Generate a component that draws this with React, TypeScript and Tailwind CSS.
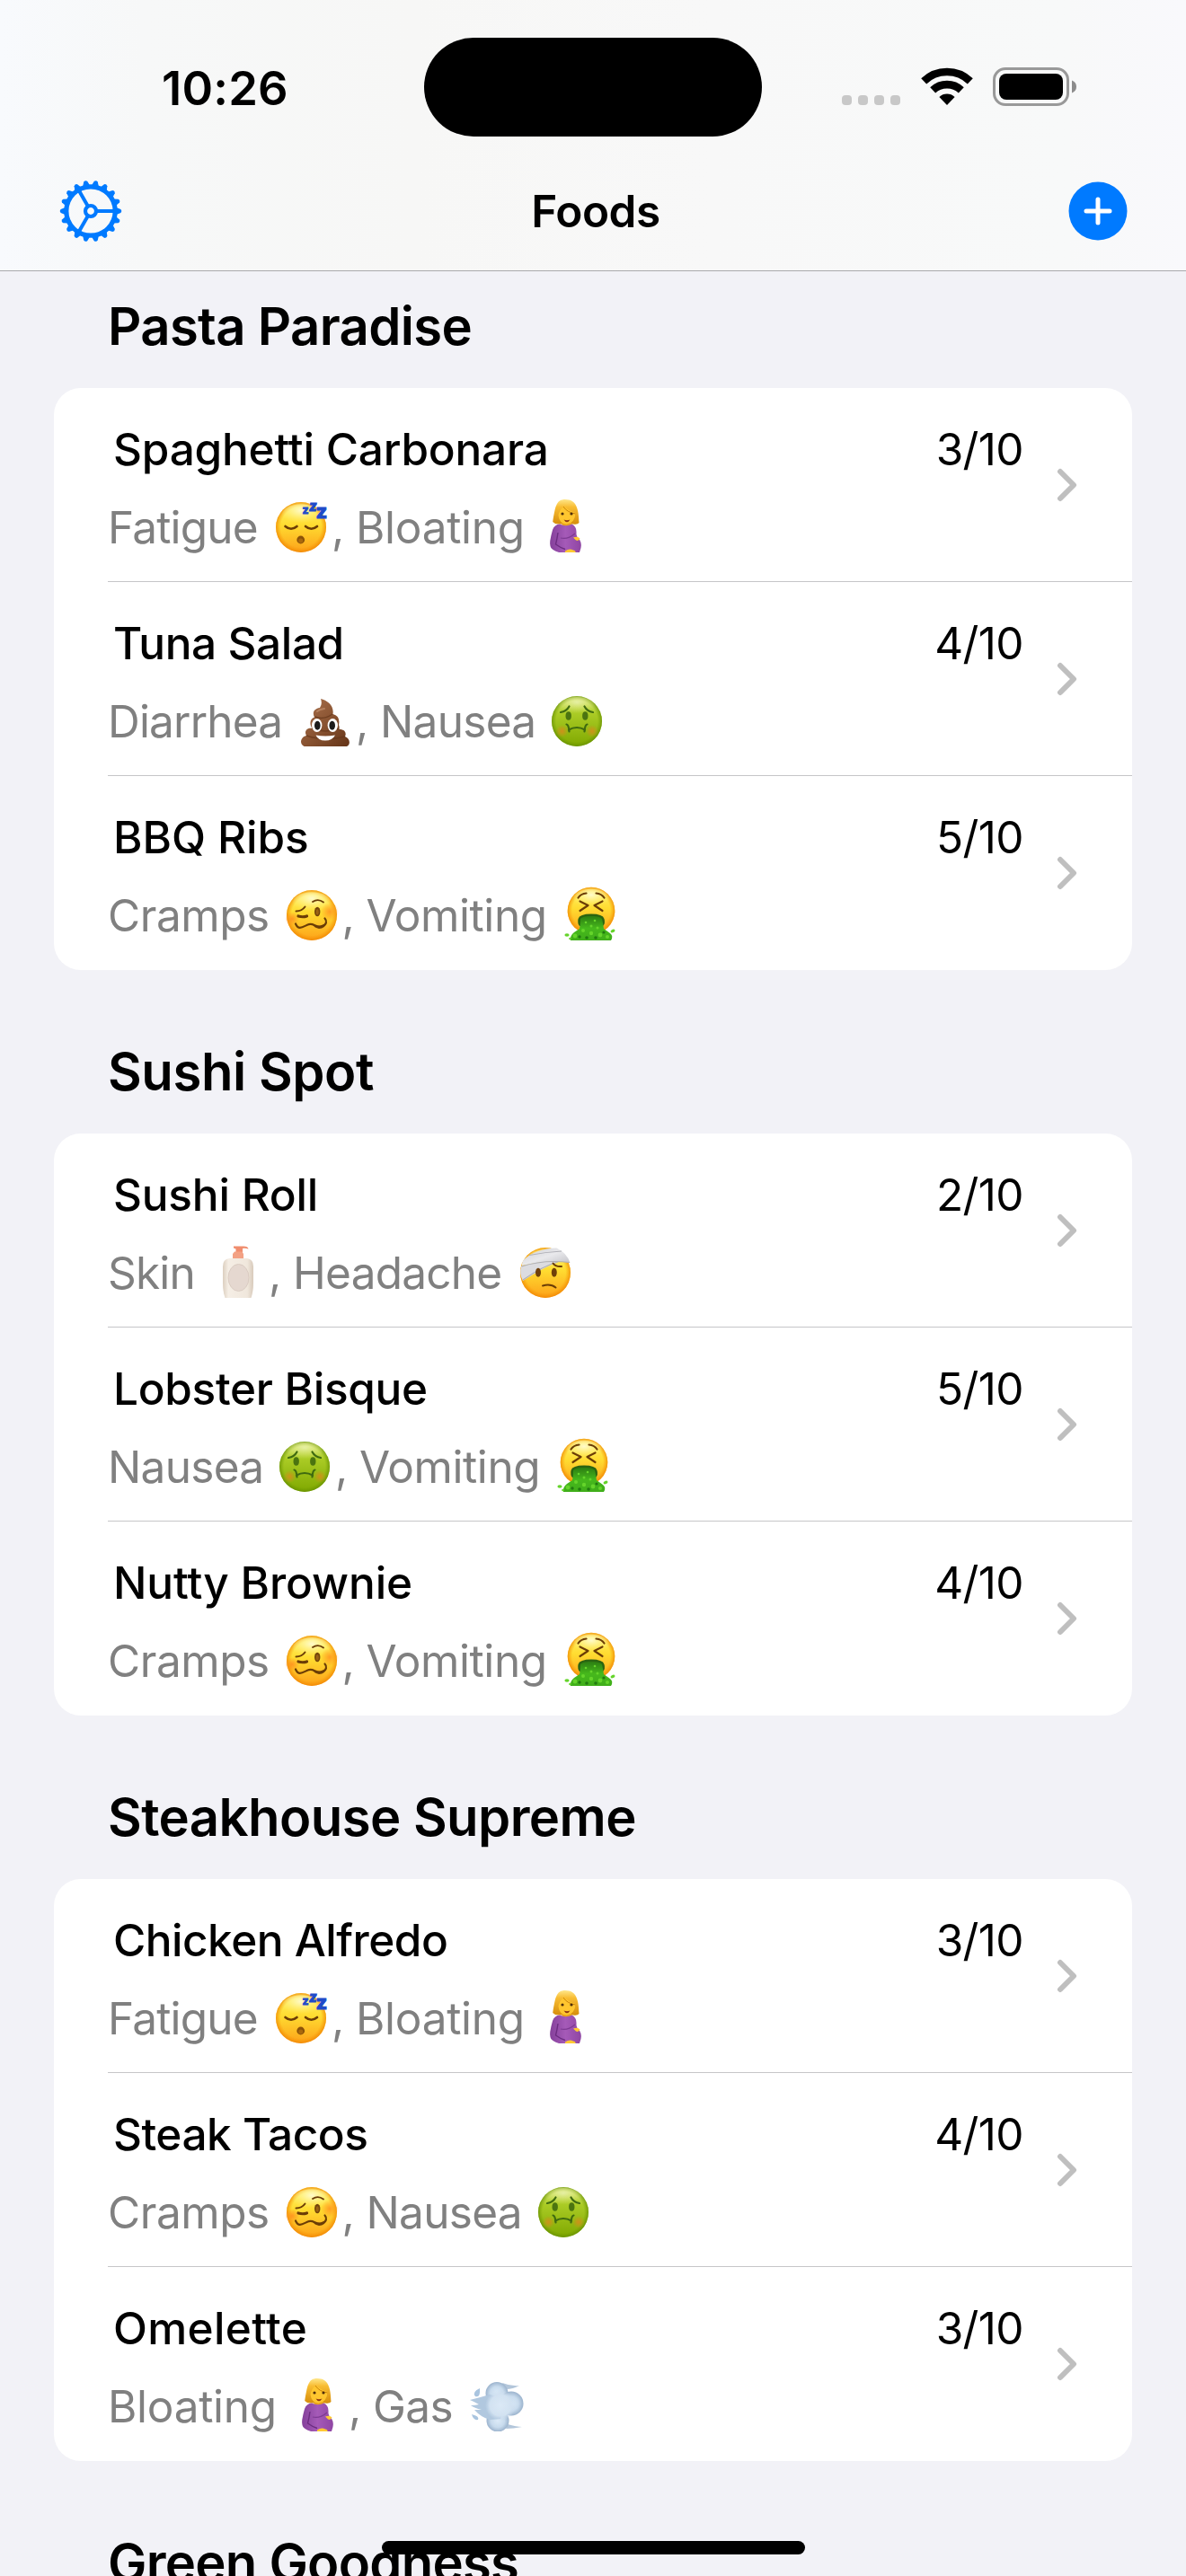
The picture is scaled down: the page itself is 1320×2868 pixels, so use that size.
import React from "react";

type EmojiName = "sleep" | "pregnant" | "poop" | "nausea" | "woozy" | "vomit" | "lotion" | "bandage" | "gas";

function Defs() {
  return (
    <svg className="absolute h-0 w-0" aria-hidden="true">
      <defs>
        <linearGradient id="faceBase" x1="0" y1="0" x2="0" y2="1">
          <stop offset="0" stopColor="#fff36a" />
          <stop offset="0.45" stopColor="#ffdc31" />
          <stop offset="1" stopColor="#fda119" />
        </linearGradient>
        <radialGradient id="faceEdge" cx="0.5" cy="0.5" r="0.5">
          <stop offset="0.8" stopColor="#f59300" stopOpacity="0" />
          <stop offset="1" stopColor="#ef8200" stopOpacity="0.75" />
        </radialGradient>
        <radialGradient id="shine" cx="0.5" cy="0.3" r="0.6">
          <stop offset="0" stopColor="#fffde0" stopOpacity="0.85" />
          <stop offset="1" stopColor="#fff68a" stopOpacity="0" />
        </radialGradient>
        <linearGradient id="greenFace" x1="0" y1="0" x2="0" y2="1">
          <stop offset="0" stopColor="#dcec84" />
          <stop offset="0.35" stopColor="#aacb25" />
          <stop offset="1" stopColor="#7fa800" />
        </linearGradient>
        <radialGradient id="greenEdge" cx="0.5" cy="0.5" r="0.5">
          <stop offset="0.82" stopColor="#6e9800" stopOpacity="0" />
          <stop offset="1" stopColor="#5f8a00" stopOpacity="0.7" />
        </radialGradient>
        <radialGradient id="cheek">
          <stop offset="0" stopColor="#d98a1c" stopOpacity="0.85" />
          <stop offset="1" stopColor="#d98a1c" stopOpacity="0" />
        </radialGradient>
        <radialGradient id="blush">
          <stop offset="0" stopColor="#ff7a1a" stopOpacity="0.65" />
          <stop offset="1" stopColor="#ff7a1a" stopOpacity="0" />
        </radialGradient>
        <linearGradient id="brown" x1="0" y1="0" x2="1" y2="1">
          <stop offset="0" stopColor="#ad7450" />
          <stop offset="0.5" stopColor="#8a5432" />
          <stop offset="1" stopColor="#643417" />
        </linearGradient>
        <linearGradient id="hair" x1="0" y1="0" x2="0" y2="1">
          <stop offset="0" stopColor="#ffe78a" />
          <stop offset="0.3" stopColor="#f8bd33" />
          <stop offset="1" stopColor="#d58d0c" />
        </linearGradient>
        <linearGradient id="purple" x1="0" y1="0" x2="1" y2="0">
          <stop offset="0" stopColor="#84409a" />
          <stop offset="0.5" stopColor="#a55ab8" />
          <stop offset="1" stopColor="#8f46a3" />
        </linearGradient>
        <linearGradient id="cream" x1="0" y1="0" x2="1" y2="0">
          <stop offset="0" stopColor="#dccfbf" />
          <stop offset="0.18" stopColor="#f5eee5" />
          <stop offset="0.8" stopColor="#f0e7dc" />
          <stop offset="1" stopColor="#d8cabb" />
        </linearGradient>
        <linearGradient id="gauze" x1="0" y1="0" x2="1" y2="1">
          <stop offset="0" stopColor="#cfcfd3" />
          <stop offset="0.5" stopColor="#e9e9ec" />
          <stop offset="1" stopColor="#bfbfc5" />
        </linearGradient>
        <radialGradient id="puff">
          <stop offset="0" stopColor="#dcebf8" />
          <stop offset="0.6" stopColor="#c8dbed" />
          <stop offset="1" stopColor="#9bb3cd" />
        </radialGradient>
        <radialGradient id="puffCore">
          <stop offset="0" stopColor="#dbe9f6" />
          <stop offset="0.7" stopColor="#d2e2f1" />
          <stop offset="1" stopColor="#c8dbed" stopOpacity="0" />
        </radialGradient>
        <linearGradient id="slime" x1="0" y1="0" x2="0" y2="1">
          <stop offset="0" stopColor="#2c7d12" />
          <stop offset="0.5" stopColor="#46b81c" />
          <stop offset="1" stopColor="#3fae1a" />
        </linearGradient>
      </defs>
    </svg>
  );
}

function Face({ cx = 32, cy = 32, r = 28 }: { cx?: number; cy?: number; r?: number }) {
  return (
    <>
      <circle cx={cx} cy={cy} r={r} fill="url(#faceBase)" />
      <circle cx={cx} cy={cy} r={r} fill="url(#faceEdge)" />
      <ellipse cx={cx} cy={cy - r * 0.5} rx={r * 0.75} ry={r * 0.42} fill="url(#shine)" />
    </>
  );
}

const ink = "#6b3d06";

const drawings: Record<EmojiName, React.ReactNode> = {
  sleep: (
    <>
      <Face />
      <g fill="none" stroke={ink} strokeWidth="2.6" strokeLinecap="round">
        <path d="M14.500 31Q21 36.500 27.500 31" />
        <path d="M37 31Q43.500 36.500 50 31" />
      </g>
      <circle cx="31.700" cy="46" r="4.400" fill="#8a5208" />
      <circle cx="31.700" cy="47" r="2.600" fill="#a9680d" />
      <g fill="#1f4bc9" stroke="#1f4bc9" strokeWidth="0.9" fontFamily="Inter, sans-serif" fontWeight="800">
        <text x="33.500" y="17" fontSize="12">z</text>
        <text x="41" y="13.800" fontSize="15" fontStyle="italic">z</text>
        <text x="48.500" y="22" fontSize="22">z</text>
      </g>
    </>
  ),
  nausea: (
    <>
      <circle cx="32" cy="32" r="28" fill="url(#greenFace)" />
      <circle cx="32" cy="32" r="28" fill="url(#greenEdge)" />
      <ellipse cx="32" cy="15" rx="20" ry="10" fill="url(#shine)" opacity="0.6" />
      <circle cx="15.500" cy="43" r="7" fill="url(#cheek)" />
      <circle cx="49" cy="43" r="7" fill="url(#cheek)" />
      <ellipse cx="22.700" cy="26" rx="3.200" ry="4.800" fill="#4b7410" />
      <ellipse cx="41.300" cy="26" rx="3.200" ry="4.800" fill="#4b7410" />
      <g fill="none" stroke="#3f6a10" strokeWidth="2.200" strokeLinecap="round">
        <path d="M14 22Q20.500 21 23.500 15.500" />
        <path d="M50 22Q43.500 21 40.500 15.500" />
        <path d="M20.500 35.500Q23 36 23.500 43.500" />
        <path d="M43.500 35.500Q41 36 40.500 43.500" />
        <path d="M23 41.500Q32 36.500 41 41.500" />
      </g>
    </>
  ),
  woozy: (
    <>
      <Face />
      <circle cx="10" cy="36" r="8" fill="url(#blush)" />
      <circle cx="52" cy="28" r="10" fill="url(#blush)" />
      <g fill="none" stroke={ink} strokeLinecap="round" strokeLinejoin="round">
        <path d="M14.500 27.500Q21 27.500 24.500 22.500" strokeWidth="2" />
        <path d="M17 33Q22 34.500 26.500 33" strokeWidth="3.200" />
        <path d="M33 17Q39 13 45 17.500" strokeWidth="1.900" />
        <path d="M14 41.500C17 49 22 45 27.500 42.500C34 39.500 36 46.500 43 44.500C49 42.500 49 38 46.500 35.500" strokeWidth="2.200" />
      </g>
      <path d="M33 42.500Q41 46 48.500 40Q47 47 40 47Q35 46 33 42.500Z" fill={ink} />
      <ellipse cx="38.200" cy="28" rx="3.200" ry="5.200" fill="#74450a" />
      <ellipse cx="38.200" cy="28.500" rx="1.600" ry="3.200" fill="#9b6314" />
    </>
  ),
  vomit: (
    <>
      <Face cy={27} r={26.3} />
      <g fill="none" stroke={ink} strokeWidth="2.200" strokeLinecap="round" strokeLinejoin="round">
        <path d="M17.500 12.500Q20.500 8 26.500 7.500" />
        <path d="M46.500 12.500Q43.500 8 37.500 7.500" />
        <path d="M19.500 16.500L28.500 21L19.500 27" />
        <path d="M44.500 16.500L35.500 21L44.500 27" />
      </g>
      <path d="M17.500 36Q19 30.500 32 30.500Q45 30.500 46.500 36Q48 41 45 44L19 44Q16.500 41 17.500 36Z" fill="#2a6410" />
      <path d="M20 36Q23 32.500 32 33Q41 32.500 44 36Q45.500 43 46 47L53 52Q57 55 54 60H9Q8 55 13 51L19 47Q20 42 20 36Z" fill="url(#slime)" />
      <g fill="#65d42b">
        <circle cx="26" cy="40" r="1.300" />
        <circle cx="36" cy="38" r="1.300" />
        <circle cx="32" cy="44" r="1.500" />
        <circle cx="39" cy="46" r="1.500" />
        <circle cx="23" cy="49" r="2" />
        <circle cx="14" cy="55" r="2.400" />
        <circle cx="32" cy="52" r="2.200" />
        <circle cx="42" cy="54" r="2.400" />
        <circle cx="50" cy="56" r="2" />
        <ellipse cx="5" cy="54" rx="2.600" ry="1.800" />
        <ellipse cx="56" cy="49.500" rx="2.600" ry="1.700" transform="rotate(-25 56 49.500)" />
        <circle cx="8.500" cy="58" r="1.300" />
      </g>
      <g fill="#217a10">
        <circle cx="19" cy="56" r="1.700" />
        <circle cx="27" cy="57" r="1.800" />
        <circle cx="37" cy="57" r="1.800" />
        <circle cx="46" cy="51" r="1.600" />
      </g>
    </>
  ),
  poop: (
    <>
      <path
        d="M27 7C34 9 42 14 40.500 24Q49 26 47 36Q48 38 47.500 41C55 41 55.500 46 54 49C61 52 60 60 54 60.500H11C3 60 3 50 11 48C8 43 12 39 17.500 40C14 35 15 29 20 27.500C17 22 20 18 26 17Q29 13 27 7Z"
        fill="url(#brown)"
      />
      <path d="M20.500 27Q30 31 40 24M17.500 40Q32 46 47 40M11 48Q32 55 54 49" fill="none" stroke="#643619" strokeWidth="1.500" opacity="0.7" />
      <path d="M23 21Q26 18.500 31 18" fill="none" stroke="#c3906d" strokeWidth="2" strokeLinecap="round" opacity="0.7" />
      <ellipse cx="22.700" cy="36.500" rx="5.700" ry="7.400" fill="#fff" />
      <ellipse cx="40.300" cy="36.500" rx="5.700" ry="7.400" fill="#fff" />
      <ellipse cx="23.300" cy="36.700" rx="3.300" ry="5" fill="#1c1c1c" />
      <ellipse cx="39.700" cy="36.700" rx="3.300" ry="5" fill="#1c1c1c" />
      <path d="M21.500 47.500Q32 49.500 43 47.500Q40 53.500 32 53.500Q24 53.500 21.500 47.500Z" fill="#fff" />
    </>
  ),
  bandage: (
    <>
      <Face />
      <path d="M7.500 18Q21 5 44.500 4.500Q56 10 59.500 21Q38 17 6 24Q6 20 7.500 18Z" fill="url(#gauze)" />
      <path d="M5 25Q22 19 46 20Q32 25 7 41Q2.500 33 5 25Z" fill="#dcdce0" />
      <path d="M5.500 25Q30 17 59 20.500M7 40Q30 24 46 20M14 12.500Q32 9 50 8" fill="none" stroke="#aeaeb5" strokeWidth="1.100" />
      <ellipse cx="24" cy="31.700" rx="3" ry="5" fill="#704009" />
      <ellipse cx="41.800" cy="31.700" rx="3" ry="5" fill="#704009" />
      <g fill="none" stroke={ink} strokeWidth="2" strokeLinecap="round">
        <path d="M40.500 21.500Q43 25.500 50 25" />
        <path d="M29 46.500Q38 44 43.500 48.500" />
      </g>
    </>
  ),
  lotion: (
    <>
      <path d="M27 2.500H38Q43 2.500 43.500 5.500Q40 4.500 37 5V9H29.500V5.500L27 4.500Z" fill="#f08d6e" />
      <path d="M28 8.500H36.500L38 11V16H26V11Z" fill="#f3a184" />
      <path d="M22 16H42Q49 17 49 25V43Q49 53 46.500 60H17.500Q15 53 15 43V25Q15 17 22 16Z" fill="url(#cream)" />
      <ellipse cx="32.500" cy="37.500" rx="11.500" ry="15" fill="#e5d8d0" />
      <ellipse cx="32.500" cy="37.500" rx="11.500" ry="15" fill="none" stroke="#d5c6bd" strokeWidth="0.8" />
    </>
  ),
  pregnant: (
    <>
      <path d="M31 1C21 1 20 9 17.200 26Q20 29 25 28.500H40Q44.500 29.500 46.500 27C46 12 44 1 31 1Z" fill="url(#hair)" />
      <path d="M27.500 24H38V31H27.500Z" fill="#e9a31b" />
      <path d="M29 9Q24 14 23.500 19Q24.500 28 32.500 28.500Q42 27.500 42.500 16Q35 14 30.500 9Z" fill="#ffc62f" />
      <path d="M29 9Q33 15.500 42.500 17" fill="none" stroke="#c8820d" strokeWidth="1" />
      <circle cx="28" cy="17" r="1.600" fill="#4d2d0c" />
      <circle cx="38" cy="17" r="1.600" fill="#4d2d0c" />
      <path d="M29.500 23.500Q33 24.800 36.500 23.500Q33 29 29.500 23.500Z" fill="#8b3514" />
      <path d="M25 28.500Q32 32 38.500 28.500Q43.500 31 43.500 37Q43 40 44.500 43Q50 48 48.500 55L47 60H24Q15 57 14.500 53Q13 49 17 35Q19 29 25 28.500Z" fill="url(#purple)" />
      <path d="M23 38Q22 45 20.500 51Q26 55 31 56.500" fill="none" stroke="#6b2c80" strokeWidth="1.400" />
      <path d="M26 44Q34 46 42 39" fill="none" stroke="#7d3a92" strokeWidth="1.200" />
      <path d="M40 43.500Q45 41.500 47.500 44.500Q46 48 43 46.500Z" fill="#ffc933" />
      <path d="M31 58.500Q36 55 40 57.500Q43 58 42.500 60H31Z" fill="#ffc933" />
    </>
  ),
  gas: (
    <>
      <path d="M38 6Q48 10 57 9Q50 13 42 13ZM44 52Q54 55 60 55Q50 57 42 57Z" fill="#b3c6da" />
      <circle cx="32" cy="17.500" r="12.500" fill="url(#puff)" />
      <circle cx="48" cy="29" r="13.500" fill="url(#puff)" />
      <circle cx="33" cy="48" r="12.500" fill="url(#puff)" />
      <path d="M2 25Q14 22 24 19L42 24L36 46L24 47Q14 44 7 36Q11 36 15 36Q7 34 3 31Q8 31 12 30Q7 27 2 25Z" fill="#b1c8df" />
      <circle cx="36" cy="31" r="17" fill="url(#puffCore)" />
      <path d="M13 12Q4 16 8 21Q14 23 13 12ZM4 41Q13 43 11 47Q6 48 4 41Z" fill="#a9c4df" />
    </>
  ),
};

function Emoji({ name }: { name: EmojiName }) {
  return (
    <svg className="h-[60px] w-[64px] shrink-0 overflow-hidden" viewBox="0 0 64 60">
      {drawings[name]}
    </svg>
  );
}

type Symptom = { label: string; emoji: EmojiName; width: string };

const fatigue: Symptom = { label: "Fatigue", emoji: "sleep", width: "w-[183px] tracking-[-0.8px]" };
const bloating: Symptom = { label: "Bloating", emoji: "pregnant", width: "w-[202px] tracking-[-0.3px]" };
const diarrhea: Symptom = { label: "Diarrhea", emoji: "poop", width: "w-[210px] tracking-[-0.8px]" };
const nausea: Symptom = { label: "Nausea", emoji: "nausea", width: "w-[187px] tracking-[-0.7px]" };
const cramps: Symptom = { label: "Cramps", emoji: "woozy", width: "w-[194.5px] tracking-[-0.45px]" };
const vomiting: Symptom = { label: "Vomiting", emoji: "vomit", width: "w-[218px] tracking-[-0.4px]" };
const skin: Symptom = { label: "Skin", emoji: "lotion", width: "w-[113px] tracking-[-0.8px]" };
const headache: Symptom = { label: "Headache", emoji: "bandage", width: "w-[248.5px] tracking-[-0.75px]" };
const gas: Symptom = { label: "Gas", emoji: "gas", width: "w-[106px] tracking-[-0.6px]" };

type Food = { name: string; tracking: string; score: string; symptoms: [Symptom, Symptom] };

const sections: { title: string; tracking: string; foods: Food[] }[] = [
  {
    title: "Pasta Paradise",
    tracking: "tracking-[-0.65px]",
    foods: [
      { name: "Spaghetti Carbonara", tracking: "tracking-[-0.2px]", score: "3/10", symptoms: [fatigue, bloating] },
      { name: "Tuna Salad", tracking: "tracking-[-0.4px]", score: "4/10", symptoms: [diarrhea, nausea] },
      { name: "BBQ Ribs", tracking: "tracking-[-0.05px]", score: "5/10", symptoms: [cramps, vomiting] },
    ],
  },
  {
    title: "Sushi Spot",
    tracking: "tracking-[-0.4px]",
    foods: [
      { name: "Sushi Roll", tracking: "tracking-[-0.2px]", score: "2/10", symptoms: [skin, headache] },
      { name: "Lobster Bisque", tracking: "tracking-[-0.3px]", score: "5/10", symptoms: [nausea, vomiting] },
      { name: "Nutty Brownie", tracking: "tracking-[-0.1px]", score: "4/10", symptoms: [cramps, vomiting] },
    ],
  },
  {
    title: "Steakhouse Supreme",
    tracking: "tracking-[-0.55px]",
    foods: [
      { name: "Chicken Alfredo", tracking: "tracking-[-0.5px]", score: "3/10", symptoms: [fatigue, bloating] },
      { name: "Steak Tacos", tracking: "tracking-[-0.5px]", score: "4/10", symptoms: [cramps, nausea] },
      { name: "Omelette", tracking: "tracking-[0.35px]", score: "3/10", symptoms: [bloating, gas] },
    ],
  },
];

function FoodRow({ food, last }: { food: Food; last: boolean }) {
  return (
    <li className={`ml-[60px] flex h-[216px] ${last ? "" : "border-b border-[#c6c6c8]"}`}>
      <div className="flex-1 pt-[38px]">
        <div className="flex h-[60px] justify-between pr-[21px] pl-[6px] text-[49.500px] leading-[60px] text-black">
          <span className={`font-medium whitespace-nowrap ${food.tracking}`}>{food.name}</span>
          <span className="tracking-[-0.6px]">{food.score}</span>
        </div>
        <div className="mt-[25px] flex h-[60px] text-[49.500px] leading-[64px] whitespace-nowrap text-[#808080]">
          <span className={food.symptoms[0].width}>{food.symptoms[0].label}</span>
          <Emoji name={food.symptoms[0].emoji} />
          <span className="w-[29px] pl-[2px]">,</span>
          <span className={food.symptoms[1].width}>{food.symptoms[1].label}</span>
          <Emoji name={food.symptoms[1].emoji} />
        </div>
      </div>
      <div className="flex w-[100px] items-center">
        <svg className="ml-[15px] h-[40px] w-[24px]" viewBox="0 0 24 40" fill="none" stroke="#bfbfbf" strokeWidth="6" strokeLinecap="round" strokeLinejoin="round">
          <path d="M5 5L20 20L5 35" />
        </svg>
      </div>
    </li>
  );
}

function SectionTitle({ children, tracking }: { children: React.ReactNode; tracking: string }) {
  return (
    <h2 className={`ml-[120px] h-[80px] text-[58px] leading-[80px] font-semibold whitespace-nowrap text-black ${tracking}`}>{children}</h2>
  );
}

function GearIcon() {
  const teeth = Array.from({ length: 18 }, (_, i) => i * 20);
  return (
    <svg className="h-[72px] w-[72px]" viewBox="-36 -36 72 72" fill="none" stroke="#007aff">
      <circle r="27.200" strokeWidth="5.200" />
      <circle r="6" strokeWidth="4.200" />
      <path d="M7 0H26M-3.500 -6.100L-13.500 -23.400M-3.500 6.100L-13.500 23.400" strokeWidth="4" />
      {teeth.map((a) => (
        <path key={a} d="M28 -4.200L33.300 -2Q35.200 0 33.300 2L28 4.200Z" fill="#007aff" stroke="none" transform={`rotate(${a})`} />
      ))}
    </svg>
  );
}

function Header() {
  return (
    <header className="flex h-[302px] flex-col border-b border-[#a9a9ac] bg-[linear-gradient(90deg,#f8fafd_0%,#f7f8f8_12%,#f7f7f6_35%,#f8f8f8_60%,#f8f9f9_90%,#f9f9fc_100%)]">
      <div className="flex h-[168px] shrink-0">
        <div className="w-[472px] pt-[58px] pl-[180px] text-[52.500px] leading-[80px] font-semibold tracking-[0.2px] text-black">10:26</div>
        <div className="mt-[42px] h-[110px] w-[376px] rounded-full bg-black" />
        <div className="flex pt-[75px] pl-[89px]">
          <div className="mt-[31px] flex h-[11px] gap-[7px]">
            {[0, 1, 2, 3].map((i) => (
              <span key={i} className="h-[11px] w-[11px] rounded-[4px] bg-[#c8c8c8]" />
            ))}
          </div>
          <svg className="ml-[23px] h-[42px] w-[58px]" viewBox="0 0 58 42" fill="none" stroke="#000">
            <path d="M3.200 15.400A37.300 37.300 0 0 1 54.800 15.400" strokeWidth="8.600" />
            <path d="M13.200 25.400A23 23 0 0 1 44.800 25.400" strokeWidth="8.600" />
            <path d="M29 42L20.400 33A12.500 12.500 0 0 1 37.600 33Z" fill="#000" stroke="none" />
          </svg>
          <svg className="ml-[22px] h-[43px] w-[94px]" viewBox="0 0 94 43">
            <rect x="1.500" y="1.500" width="82" height="40" rx="12.500" fill="none" stroke="#999" strokeWidth="3" />
            <rect x="7" y="7" width="71" height="29" rx="8" fill="#000" />
            <path d="M88 14.500Q93 16.500 93 21.500Q93 26.500 88 28.500Z" fill="#8c8c8c" />
          </svg>
        </div>
      </div>
      <div className="flex h-[133px] items-center justify-between px-[65px]">
        <GearIcon />
        <h1 className="text-[49.500px] leading-[60px] font-semibold tracking-[-0.5px] text-black">Foods</h1>
        <svg className="h-[66px] w-[66px]" viewBox="-33 -33 66 66" fill="none" stroke="#fff" strokeWidth="5" strokeLinecap="round">
          <circle r="32.500" fill="#007aff" stroke="none" />
          <path d="M-13 0H13M0 -13V13" />
        </svg>
      </div>
    </header>
  );
}

export default function App() {
  return (
    <div className="relative h-[2868px] w-[1320px] overflow-hidden bg-[#f2f2f7] font-['Inter',sans-serif]">
      <Defs />
      <Header />
      <main className="pt-[21px]">
        {sections.map((s) => (
          <section key={s.title} className="mb-[73px]">
            <SectionTitle tracking={s.tracking}>{s.title}</SectionTitle>
            <ul className="mx-[60px] mt-[29px] rounded-[30px] bg-white">
              {s.foods.map((f, i) => (
                <FoodRow key={f.name} food={f} last={i === s.foods.length - 1} />
              ))}
            </ul>
          </section>
        ))}
        <SectionTitle tracking="tracking-[-0.75px]">Green Goodness</SectionTitle>
      </main>
      <div className="absolute top-[2829px] left-[425px] h-[15px] w-[471px] rounded-full bg-black" />
    </div>
  );
}
